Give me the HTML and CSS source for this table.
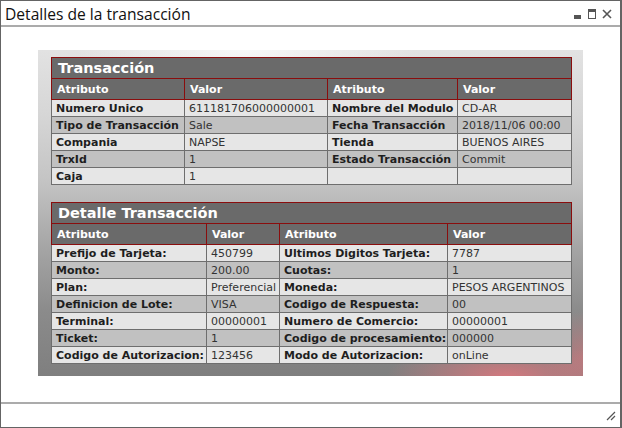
FILE: index.html
```html
<!DOCTYPE html>
<html>
<head>
<meta charset="utf-8">
<link rel="stylesheet" href="styles.css">
</head>
<body>
<div class="window">
  <div class="titlebar">
    <span class="title">Detalles de la transacción</span>
    <div class="controls">
      <svg class="ctl" width="9" height="10" viewBox="0 0 9 10"><rect x="0" y="6" width="7" height="4" fill="#555"/></svg>
      <svg class="ctl" width="9" height="10" viewBox="0 0 9 10"><rect x="0.5" y="0.5" width="7" height="9" fill="none" stroke="#555"/><rect x="0" y="0" width="8" height="3" fill="#555"/></svg>
      <svg class="ctl" width="10" height="10" viewBox="0 0 10 10"><path d="M1 1 L9 9 M9 1 L1 9" stroke="#555" stroke-width="1.6"/></svg>
    </div>
  </div>
  <div class="content">
    <div class="panel">
      <table class="grid t1">
        <colgroup><col class="c1"><col class="c2"><col class="c3"><col class="c4"></colgroup>
        <tr class="cap"><th colspan="4">Transacción</th></tr>
        <tr class="head"><th>Atributo</th><th>Valor</th><th>Atributo</th><th>Valor</th></tr>
        <tr class="lt"><td class="k">Numero Unico</td><td>611181706000000001</td><td class="k">Nombre del Modulo</td><td>CD-AR</td></tr>
        <tr class="dk"><td class="k">Tipo de Transacción</td><td>Sale</td><td class="k">Fecha Transacción</td><td>2018/11/06 00:00</td></tr>
        <tr class="lt"><td class="k">Compania</td><td>NAPSE</td><td class="k">Tienda</td><td>BUENOS AIRES</td></tr>
        <tr class="dk"><td class="k">TrxId</td><td>1</td><td class="k">Estado Transacción</td><td>Commit</td></tr>
        <tr class="lt"><td class="k">Caja</td><td>1</td><td class="k"></td><td></td></tr>
      </table>
      <table class="grid t2">
        <colgroup><col class="d1"><col class="d2"><col class="d3"><col class="d4"></colgroup>
        <tr class="cap"><th colspan="4">Detalle Transacción</th></tr>
        <tr class="head"><th>Atributo</th><th>Valor</th><th>Atributo</th><th>Valor</th></tr>
        <tr class="lt"><td class="k">Prefijo de Tarjeta:</td><td>450799</td><td class="k">Ultimos Digitos Tarjeta:</td><td>7787</td></tr>
        <tr class="dk"><td class="k">Monto:</td><td>200.00</td><td class="k">Cuotas:</td><td>1</td></tr>
        <tr class="lt"><td class="k">Plan:</td><td>Preferencial</td><td class="k">Moneda:</td><td>PESOS ARGENTINOS</td></tr>
        <tr class="dk"><td class="k">Definicion de Lote:</td><td>VISA</td><td class="k">Codigo de Respuesta:</td><td>00</td></tr>
        <tr class="lt"><td class="k">Terminal:</td><td>00000001</td><td class="k">Numero de Comercio:</td><td>00000001</td></tr>
        <tr class="dk"><td class="k">Ticket:</td><td>1</td><td class="k">Codigo de procesamiento:</td><td>000000</td></tr>
        <tr class="lt"><td class="k">Codigo de Autorizacion:</td><td>123456</td><td class="k">Modo de Autorizacion:</td><td>onLine</td></tr>
      </table>
    </div>
  </div>
  <div class="footer">
    <svg class="grip" width="10" height="10" viewBox="0 0 10 10"><path d="M1 9 L9 1 M5 9 L9 5" stroke="#555" stroke-width="1.2"/></svg>
  </div>
</div>
</body>
</html>
```

FILE: styles.css
```css
html, body {
  margin: 0;
  padding: 0;
  background: #fff;
}
* {
  box-sizing: border-box;
}
.window {
  width: 622px;
  height: 428px;
  border: 1px solid #646464;
  border-right-width: 2px;
  display: flex;
  flex-direction: column;
  background: #fff;
}
.titlebar {
  height: 26px;
  flex: none;
  border-bottom: 2px solid #ababab;
  display: flex;
  align-items: center;
  justify-content: space-between;
  padding: 0 8px 0 4px;
}
.title {
  font-family: "Open Sans", sans-serif;
  font-size: 15.6px;
  color: #111;
  position: relative;
  top: 1px;
}
.controls {
  display: flex;
  align-items: center;
  gap: 5px;
  padding-top: 2px;
}
.content {
  flex: 1;
  display: flex;
  justify-content: center;
  align-items: flex-start;
  padding-top: 23px;
}
.panel {
  width: 545px;
  height: 326px;
  padding: 7px 12px 0 13px;
  display: flex;
  flex-direction: column;
  gap: 17px;
  background:
    radial-gradient(ellipse 120px 34px at 86% 100%, rgba(214,120,126,0.95), rgba(214,120,126,0) 100%),
    radial-gradient(ellipse 40px 45px at 100% 94%, rgba(212,118,124,0.6), rgba(212,118,124,0) 100%),
    radial-gradient(ellipse 170px 40px at 38% 0%, rgba(250,250,250,0.9), rgba(250,250,250,0) 100%),
    linear-gradient(to bottom, #e2e2e2 0%, #d6d6d6 20%, #c4c4c4 40%, #a6a6a6 60%, #8b8b8b 80%, #7f7f7f 100%);
}
.footer {
  height: 25px;
  flex: none;
  border-top: 2px solid #ababab;
  display: flex;
  justify-content: flex-end;
  align-items: flex-end;
  padding: 0 4px 6px 0;
}
.grid {
  border-collapse: collapse;
  table-layout: fixed;
  width: 520px;
  font-family: "DejaVu Sans", Verdana, sans-serif;
  font-size: 11px;
}
.c1 { width: 133px; }
.c2 { width: 143px; }
.c3 { width: 130px; }
.c4 { width: 114px; }
.d1 { width: 155px; }
.d2 { width: 73px; }
.d3 { width: 168px; }
.d4 { width: 124px; }
.grid th, .grid td {
  text-align: left;
  white-space: nowrap;
  overflow: hidden;
}
.cap th {
  height: 21px;
  padding: 0 6px;
  background: #6a6a6a;
  color: #fff;
  font-size: 14.5px;
  font-weight: bold;
  border: 1px solid #8a0d0d;
  line-height: 19px;
}
.head th {
  height: 21px;
  padding: 0 5px;
  background: #6a6a6a;
  color: #fff;
  font-weight: bold;
  border: 1px solid #8a0d0d;
}
.grid td {
  height: 17px;
  padding: 1px 4px 0;
  border: 1px solid #6e6e6e;
  color: #333;
  line-height: 15px;
}
.grid td.k {
  font-weight: bold;
  color: #1e1e1e;
}
.lt td { background: #e6e6e6; }
.dk td { background: #c1c1c1; }
```
